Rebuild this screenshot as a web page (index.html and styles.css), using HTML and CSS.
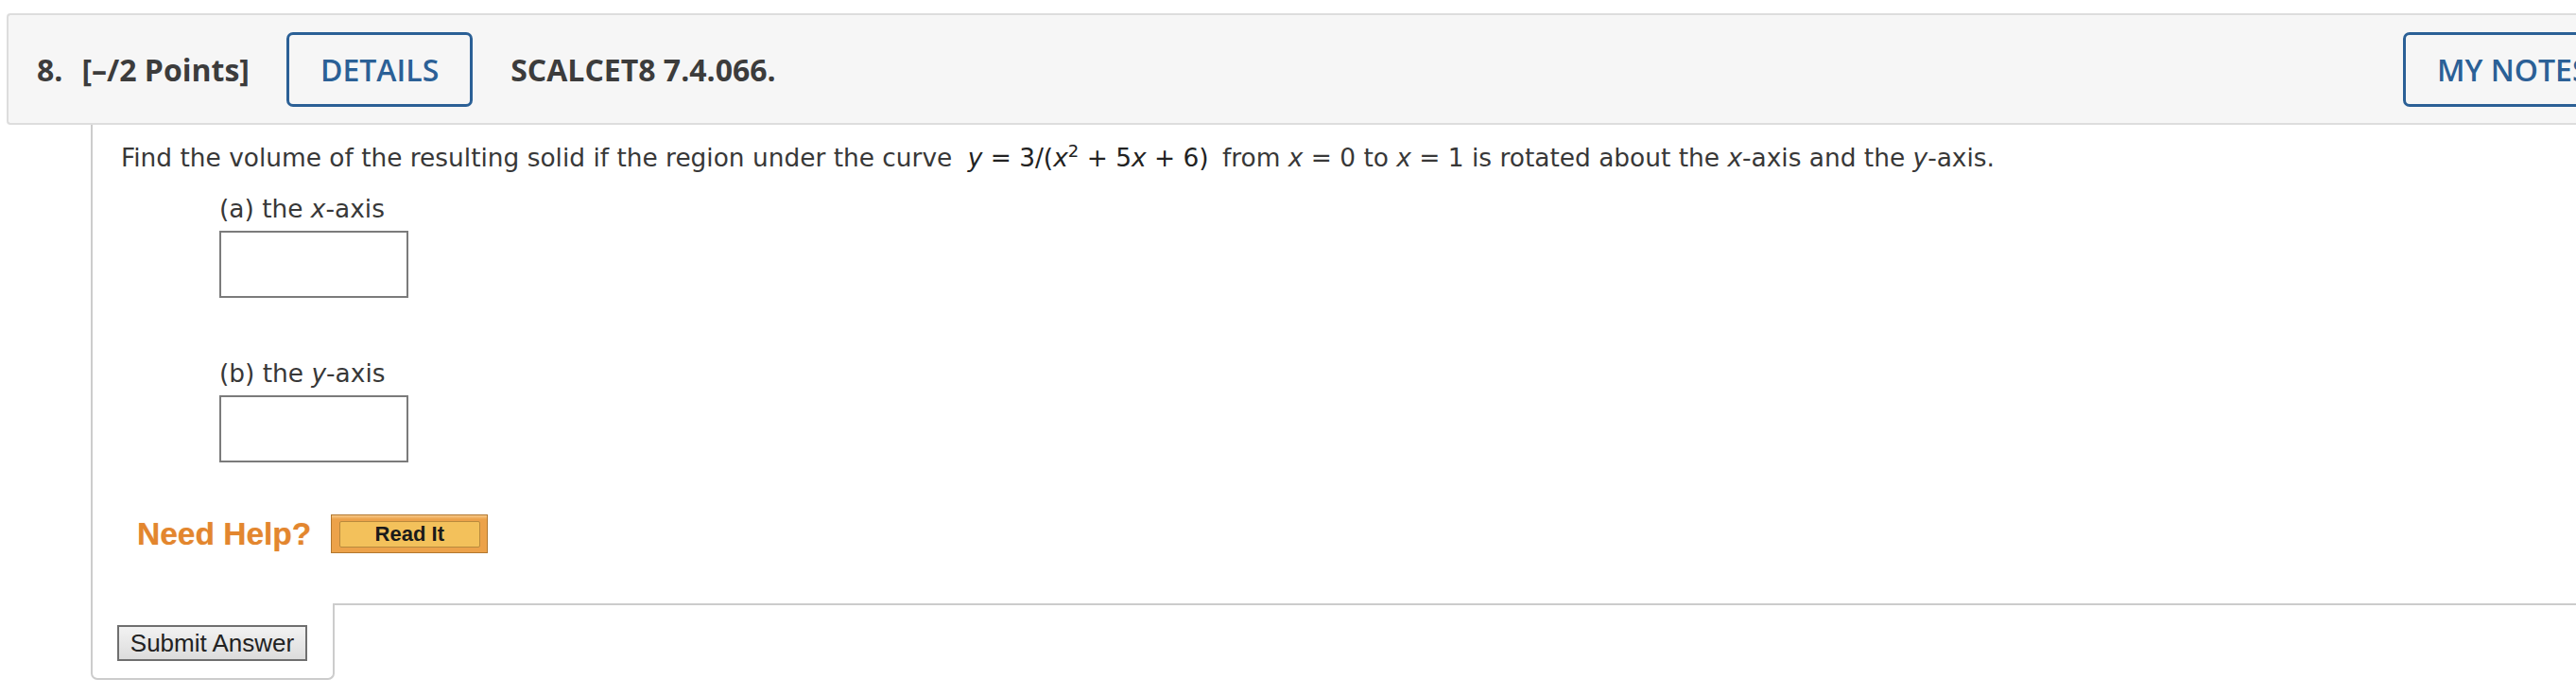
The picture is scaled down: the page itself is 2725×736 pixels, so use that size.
FILE: index.html
```html
<!DOCTYPE html>
<html>
<head>
<meta charset="utf-8">
<link rel="stylesheet" href="styles.css">
</head>
<body>
<div class="page">
  <div class="header">
    <div class="hleft">
      <span class="qnum">8.</span>
      <span class="points">[–/2 Points]</span>
      <button class="hbtn">DETAILS</button>
      <span class="qid">SCALCET8 7.4.066.</span>
    </div>
    <button class="hbtn notes">MY NOTES</button>
  </div>
  <div class="qbody">
    <div class="content">
      <p class="prompt">Find the volume of the resulting solid if the region under the curve <span class="math"><i>y</i> = 3/(<i>x</i><sup>2</sup> + 5<i>x</i> + 6)</span> from <i>x</i> = 0 to <i>x</i> = 1 is rotated about the <i>x</i>-axis and the <i>y</i>-axis.</p>
      <div class="part">
        <p class="label">(a) the <i>x</i>-axis</p>
        <div class="answer"></div>
      </div>
      <div class="part partb">
        <p class="label">(b) the <i>y</i>-axis</p>
        <div class="answer"></div>
      </div>
      <div class="help">
        <span class="needhelp">Need Help?</span>
        <span class="readit"><span class="readit-inner">Read It</span></span>
      </div>
    </div>
    <div class="footer">
      <div class="submit-cell"><button class="submit">Submit Answer</button></div>
      <div class="rest"></div>
    </div>
  </div>
</div>
</body>
</html>
```
FILE: styles.css
```css
html, body {
  margin: 0;
  padding: 0;
  background: #ffffff;
  overflow: hidden;
}
.page {
  padding: 14px 0 0 7px;
  width: 2900px;
}
.header {
  box-sizing: border-box;
  height: 118px;
  border: 2px solid #dddddd;
  border-right: none;
  border-radius: 4px 0 0 4px;
  background: #f6f6f6;
  display: flex;
  align-items: center;
  padding-left: 30px;
  font-family: "Open Sans", "DejaVu Sans", sans-serif;
  color: #3c3c3c;
}
.hleft {
  display: flex;
  align-items: center;
  width: 2503px;
  flex: none;
}
.qnum {
  font-weight: 700;
  font-size: 32px;
  margin-right: 20px;
}
.points {
  font-weight: 700;
  font-size: 32px;
  margin-right: 39px;
}
.hbtn {
  box-sizing: border-box;
  height: 79px;
  border: 3px solid #2b6096;
  border-radius: 7px;
  background: transparent;
  color: #2b6096;
  font-family: "Open Sans", sans-serif;
  font-weight: 600;
  font-size: 32px;
  padding: 0 33px;
  margin: 0;
}
.qid {
  font-weight: 700;
  font-size: 32px;
  margin-left: 40px;
}
.notes {
  flex: none;
  width: 260px;
  text-align: left;
  padding-left: 33px;
  white-space: nowrap;
}
.qbody {
  margin-left: 89px;
  font-family: "DejaVu Sans", Verdana, sans-serif;
  color: #383838;
  font-size: 26.4px;
}
.content {
  border-left: 2px solid #cccccc;
  padding: 18px 0 53px 30px;
}
.content p {
  margin: 0;
  line-height: 34px;
}
.math {
  color: #222;
  margin: 0 6px 0 8px;
}
sup {
  font-size: 18px;
  line-height: 0;
  vertical-align: 10px;
}
.part {
  margin-left: 104px;
  margin-top: 20px;
}
.partb {
  margin-top: 63px;
}
.label {
  margin-bottom: 6px !important;
}
.answer {
  box-sizing: border-box;
  width: 200px;
  height: 71px;
  border: 2px solid #7b7b7b;
  background: #fff;
}
.help {
  margin-top: 55px;
  margin-left: 17px;
  display: flex;
  align-items: center;
}
.needhelp {
  font-family: "Liberation Sans", Arial, sans-serif;
  font-weight: 700;
  font-size: 33.5px;
  color: #e3862e;
  margin-right: 21px;
  text-shadow: 0 0 1px rgba(227, 134, 46, 0.5);
}
.readit {
  box-sizing: border-box;
  width: 166px;
  height: 41px;
  border: 1px solid #b2772f;
  background: linear-gradient(#f6c98a 0, #eca24a 4px, #eca24a 100%);
  display: flex;
  align-items: center;
  justify-content: center;
}
.readit-inner {
  box-sizing: border-box;
  width: 149px;
  height: 28px;
  border: 1px solid #b98a3d;
  border-radius: 2px;
  background: #f3c15b;
  font-family: "Liberation Sans", Arial, sans-serif;
  font-weight: 700;
  font-size: 22px;
  color: #1a1a1a;
  display: flex;
  align-items: center;
  justify-content: center;
  line-height: 1;
}
.footer {
  display: flex;
}
.submit-cell {
  box-sizing: border-box;
  width: 258px;
  height: 81px;
  border-left: 2px solid #cccccc;
  border-right: 2px solid #cccccc;
  border-bottom: 2px solid #cccccc;
  border-radius: 0 0 7px 7px;
  padding: 23px 0 0 26px;
}
.submit {
  box-sizing: border-box;
  width: 201px;
  height: 38px;
  border: 2px solid #6f6f6f;
  background: linear-gradient(#f2f2f2, #dcdcdc);
  font-family: "Liberation Sans", Arial, sans-serif;
  font-size: 26px;
  color: #222;
  padding: 0;
  margin: 0;
  line-height: 1;
}
.rest {
  flex: 1;
  border-top: 2px solid #cccccc;
}
```
